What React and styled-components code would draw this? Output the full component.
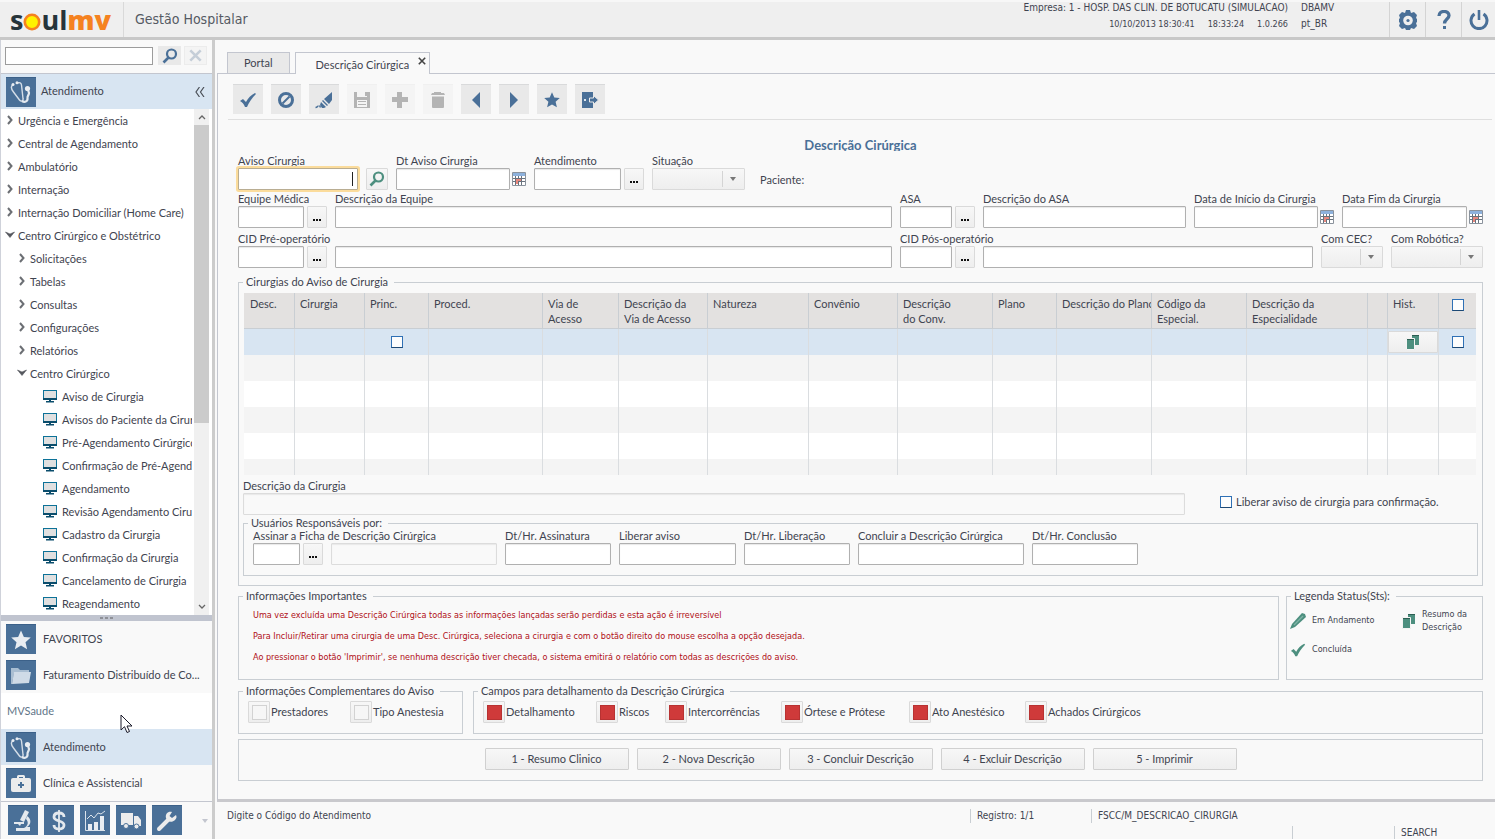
import React from 'react';
import styled, { createGlobalStyle, css } from 'styled-components';

const c = {
  text: '#3f4450',
  blue: '#4a7098',
  blueDark: '#3c6189',
  green: '#4d8f7f',
  line: '#c3c6cf',
  frame: '#c9ced3',
  select: '#d8e5f2',
  page: '#f9f9f9',
  red: '#b00e16',
};

const compact = '"DejaVu Sans Condensed", "DejaVu Sans", sans-serif';

const GlobalStyle = createGlobalStyle`
  *, *::before, *::after { box-sizing: border-box; }
  body { margin: 0; background: ${c.page}; }
  body, button, input, select { font-family: Lato, "Liberation Sans", sans-serif; font-size: 11px; color: ${c.text}; }
  button { padding: 0; border: 0; background: none; }
  ul { list-style: none; margin: 0; padding: 0; }
`;

/* ---------- shell ---------- */

const Page = styled.div`
  display: flex;
  flex-direction: column;
  height: 100vh;
  overflow: hidden;
`;

const Header = styled.header`
  display: flex;
  flex: none;
  height: 40px;
  background: #efefef;
  border-top: 2px solid #f7f7f7;
  border-bottom: 3px solid #c8c8c8;
`;

const Logo = styled.div`
  display: flex;
  align-items: center;
  width: 124px;
  padding-left: 10px;
  border-right: 1px solid #d9d9d9;
  font: 700 27px/34px "Open Sans", sans-serif;
  color: #26343a;
  svg { margin-top: 4px; }
  b { color: #f58220; }
`;

const Product = styled.h1`
  flex: 1;
  margin: 0;
  padding-left: 11px;
  font-family: ${compact};
  font-size: 14px;
  font-weight: 400;
  line-height: 34px;
  color: #555a63;
`;

const Session = styled.div`
  display: grid;
  grid-template-columns: auto 88px;
  column-gap: 13px;
  align-content: start;
  font-family: ${compact};
  font-size: 10px;
  line-height: 12px;
  row-gap: 4px;
`;

const SessionLine = styled.div`
  display: flex;
  justify-content: flex-end;
  gap: 13px;
  font-size: ${(p) => (p.$small ? 9 : 10)}px;
`;

const HeaderButton = styled.button`
  display: flex;
  align-items: center;
  justify-content: center;
  width: 36px;
  border-left: 1px solid #d4d4d4;
  &:last-child { width: 34px; }
`;

const Body = styled.div`
  display: flex;
  flex: 1;
  min-height: 0;
`;

/* Raises the text by a pixel against the icon beside it. */
const Caption = styled.span`
  padding-bottom: 2px;
`;

/* ---------- sidebar ---------- */

const Sidebar = styled.aside`
  display: flex;
  flex-direction: column;
  flex: none;
  width: 215px;
  border-left: 1px solid #cfd2da;
  border-right: 3px solid #ccc;
`;

const Search = styled.form`
  display: flex;
  align-items: center;
  height: 34px;
  padding: 0 5px 2px 4px;
  border-bottom: 1px solid ${c.line};
  input {
    flex: 1;
    min-width: 0;
    height: 18px;
    margin-right: 5px;
    border: 1px solid #9c9c9c;
    background: #fff;
  }
`;

const SmallButton = styled.button`
  display: flex;
  align-items: center;
  justify-content: center;
  width: 23px;
  height: 19px;
  margin-right: ${(p) => (p.$muted ? 0 : 3)}px;
  background: ${(p) => (p.$muted ? '#f4f4f4' : '#e9e9e9')};
  border: 1px solid ${(p) => (p.$muted ? '#ececec' : '#e9e9e9')};
`;

const ModuleTitle = styled.div`
  display: flex;
  align-items: center;
  height: 35px;
  padding: 0 7px 0 5px;
  background: ${c.select};
  gap: 5px;
  span { flex: 1; }
`;

const Tile = styled.span`
  && { flex: none; }
  display: flex;
  align-items: center;
  justify-content: center;
  width: 30px;
  height: 30px;
  background: ${c.blue};
  border-top: 1px solid ${c.blueDark};
  color: #e9edf2;
`;

const TreePane = styled.div`
  display: flex;
  flex: 1;
  min-height: 0;
  background: #fff;
  padding-right: 3px;
`;

const Tree = styled.ul`
  flex: 1;
  min-width: 0;
  overflow: hidden;
  margin-right: 2px;
`;

const Branch = styled.li`
  display: flex;
  align-items: center;
  height: 23px;
  padding-bottom: 1px;
  padding-left: ${(p) => [4, 16, 42][p.$level]}px;
  gap: ${(p) => (p.$level === 2 ? 5 : 3)}px;
  white-space: nowrap;
  svg { flex: none; }
`;

const ScrollTrack = styled.div`
  display: flex;
  flex-direction: column;
  width: 15px;
  background: #f0f0f0;
`;

const ScrollArrow = styled.button`
  display: flex;
  align-items: center;
  justify-content: center;
  height: 16px;
`;

const ScrollThumb = styled.div`
  flex: 298;
  background: #cbcbcb;
`;

const ScrollRest = styled.div`
  flex: 176;
`;

const Splitter = styled.div`
  display: flex;
  align-items: center;
  justify-content: center;
  gap: 2px;
  height: 6px;
  background: #c0c4cf;
  i { width: 3px; height: 2px; background: #8e9097; }
`;

const ModuleRow = styled.li`
  position: relative;
  display: flex;
  align-items: center;
  height: 36px;
  padding-left: 5px;
  gap: 7px;
  white-space: nowrap;
  overflow: ${(p) => (p.$plain ? 'visible' : 'hidden')};
  background: ${(p) => (p.$active ? c.select : p.$plain ? '#fff' : c.page)};
  ${(p) => p.$plain && css`padding-left: 6px; color: #5f7588;`}
`;

const Pointer = styled.svg`
  position: absolute;
  left: 119px;
  top: 21px;
  z-index: 2;
`;

const Shortcuts = styled.div`
  display: flex;
  align-items: flex-start;
  gap: 6px;
  height: 38px;
  padding: 3px 4px 0 7px;
  border-top: 1px solid ${c.line};
  > svg { margin: 14px 0 0 auto; }
`;

/* ---------- main area ---------- */

const Main = styled.main`
  display: flex;
  flex-direction: column;
  flex: 1;
  min-width: 0;
  padding-left: 2px;
`;

const Tabs = styled.nav`
  display: flex;
  align-items: flex-end;
  flex: none;
  gap: 5px;
  height: 34px;
  padding-left: 10px;
  border-bottom: 1px solid ${c.line};
`;

const Tab = styled.button`
  display: flex;
  align-items: center;
  justify-content: center;
  height: 21px;
  padding: 0 16px;
  background: #e9e9e9;
  border: 1px solid ${c.line};
  border-bottom: 0;
  line-height: 20px;
  ${(p) =>
    p.$active &&
    css`
      height: 22px;
      margin-bottom: -1px;
      padding: 2px 3px 0 20px;
      gap: 9px;
      background: ${c.page};
      svg { margin-top: -7px; }
    `}
`;

const Workspace = styled.section`
  flex: 1;
  padding: 10px 3px 0 10px;
  border-left: 1px solid ${c.line};
  border-bottom: 3px solid #c9c9cd;
`;

const Toolbar = styled.div`
  display: flex;
  gap: 8px;
  height: 36px;
  padding-left: 5px;
  border-bottom: 1px solid #dfdfdf;
`;

const Tool = styled.button`
  display: flex;
  align-items: center;
  justify-content: center;
  width: 30px;
  height: 30px;
  background: ${(p) => (p.disabled ? '#f4f4f4' : '#e9e9e9')};
  border-top: 1px solid ${(p) => (p.disabled ? '#f0f0f0' : '#d9dadb')};
  color: ${(p) => (p.disabled ? '#b4b4b4' : c.blue)};
`;

const Form = styled.form`
  padding: 18px 9px 0 10px;
`;

const Heading = styled.h2`
  height: 13px;
  margin: 0 0 4px;
  overflow: hidden;
  text-align: center;
  font-size: 13px;
  line-height: 14px;
  color: ${c.blue};
`;

const Row = styled.div`
  display: flex;
  align-items: flex-end;
  gap: 8px;
  margin-bottom: ${(p) => p.$after || 0}px;
`;

const Cell = styled.div`
  display: flex;
  flex-direction: column;
  flex: ${(p) => (p.$w ? `0 0 ${p.$w}px` : '1')};
  min-width: 0;
  label {
    height: 13px;
    line-height: 12px;
    white-space: nowrap;
  }
`;

const Line = styled.div`
  position: relative;
  display: flex;
  align-items: center;
  gap: ${(p) => p.$gap || 2}px;
`;

const TextBox = styled.input`
  flex: 1;
  min-width: 0;
  height: 22px;
  padding: 0 4px;
  border: 1px solid #b0b0b0;
  border-radius: 1px;
  background: #fff;
  box-shadow: inset 0 1px 1px #e8e8e8;
  outline: 0;
  &:read-only { border-color: #dcdcdc; background: ${c.page}; }
  ${(p) => p.$focus && css`box-shadow: 0 0 0 2px #fbdc9c; border-color: #b9ad92;`}
`;

const Caret = styled.i`
  position: absolute;
  right: 5px;
  top: 4px;
  width: 1px;
  height: 14px;
  background: #222;
`;

const raised = css`
  border: 1px solid #dadada;
  border-radius: 1px;
  background: linear-gradient(#f7f7f7, #eeeeee);
`;

const Lookup = styled.button`
  ${raised}
  flex: none;
  width: ${(p) => p.$w || 20}px;
  height: 22px;
  display: flex;
  align-items: center;
  justify-content: center;
  gap: 1px;
  i { width: 2px; height: 2px; margin-top: 6px; background: #111; }
`;

const SelectWrap = styled.div`
  position: relative;
  display: flex;
  select {
    ${raised}
    appearance: none;
    width: 100%;
    height: 22px;
  }
  &::before {
    content: '';
    position: absolute;
    right: 22px;
    top: 3px;
    width: 1px;
    height: 16px;
    background: #d4d4d4;
  }
  &::after {
    content: '';
    position: absolute;
    right: 9px;
    top: 9px;
    border: 3px solid transparent;
    border-top: 4px solid #777;
    border-bottom: 0;
  }
`;

const Patient = styled.span`
  padding-left: 7px;
  line-height: 20px;
`;

const Group = styled.fieldset`
  flex: ${(p) => (p.$w ? `0 0 ${p.$w}px` : '1')};
  min-width: 0;
  margin: 0;
  padding: 0 4px ${(p) => p.$bottom || 0}px;
  border: 1px solid ${c.frame};
  legend {
    height: 13px;
    padding: 0 6px 0 3px;
    line-height: 12px;
  }
`;

const TableClip = styled.div`
  height: 182px;
  margin: 4px 2px 5px 1px;
  overflow: hidden;
`;

const Grid = styled.table`
  width: 100%;
  table-layout: fixed;
  border-collapse: separate;
  border-spacing: 0;
  th {
    height: 36px;
    padding: 3px 0 0 5px;
    text-align: left;
    vertical-align: top;
    font-weight: 400;
    line-height: 15px;
    background: #e3e1e0;
    border-left: 1px solid ${c.frame};
    border-bottom: 1px solid ${c.frame};
    overflow: hidden;
    white-space: nowrap;
  }
  td {
    height: 26px;
    padding: 0;
    text-align: center;
    border-left: 1px solid #dadde0;
  }
  th:first-child { padding-left: 6px; }
  th:last-child { padding-left: 0; }
  th:first-child, td:first-child { border-left: 0; }
  tbody tr { background: #fff; }
  tbody tr:nth-child(even) { background: #f4f4f4; }
  tbody tr:first-child { background: ${c.select}; }
`;

const HistoryButton = styled.button`
  ${raised}
  display: flex;
  align-items: center;
  justify-content: center;
  width: 100%;
  height: 22px;
`;

const Check = styled.input`
  appearance: none;
  display: block;
  width: 12px;
  height: 12px;
  margin: ${(p) => (p.$head ? '3px auto 0' : p.$inline ? '0' : '0 auto')};
  border: 1px solid #2f70b5;
  border-bottom-color: #1d4873;
  background: #fdfdfd;
`;

const Release = styled.label`
  display: flex;
  align-items: center;
  gap: 4px;
  width: 258px;
  height: 22px;
  padding-bottom: 4px;
`;

const DescriptionRow = styled(Row)`
  gap: 35px;
`;

const UserRow = styled(Row)`
  padding-left: 5px;
`;

const Pair = styled.div`
  display: flex;
  gap: ${(p) => p.$gap}px;
  margin-top: ${(p) => p.$top}px;
`;

const Notices = styled.div`
  height: 76px;
  padding: 2px 0 0 10px;
  font-family: ${compact};
  font-size: 9px;
  color: ${c.red};
  p { margin: 0; line-height: 21px; }
`;

const Legend = styled.ul`
  display: grid;
  grid-template-columns: 112px 1fr;
  grid-template-rows: 29px 29px;
  padding-top: 3px;
  margin: 0 -1px;
  font-family: ${compact};
  font-size: 9px;
  line-height: 13px;
  li { display: flex; align-items: center; gap: 6px; }
`;

const Details = styled.div`
  display: grid;
  grid-template-columns: ${(p) => p.$cols};
  height: 35px;
  padding: 3px 0 0 5px;
`;

const Detail = styled.button`
  display: flex;
  align-items: center;
  gap: 1px;
  height: 22px;
  white-space: nowrap;
  i {
    ${raised}
    display: flex;
    align-items: center;
    justify-content: center;
    width: 22px;
    height: 22px;
  }
  i::after {
    content: '';
    width: 15px;
    height: 15px;
    background: ${(p) => (p.$on ? '#cf3a3a' : '#f6f6f6')};
    border: 1px solid ${(p) => (p.$on ? '#b83232' : '#d2d2d2')};
  }
`;

const Actions = styled.div`
  display: flex;
  justify-content: center;
  align-items: center;
  gap: 8px;
  height: 42px;
  margin-top: 5px;
  padding-bottom: 2px;
  border: 1px solid ${c.frame};
`;

const Action = styled.button`
  ${raised}
  width: 144px;
  height: 22px;
  padding-bottom: 2px;
  border-color: #d0d0d0;
`;

const Status = styled.footer`
  flex: none;
  height: 37px;
  padding: 7px 0 0 10px;
  font-family: ${compact};
  font-size: 10px;
  div { display: flex; height: 14px; line-height: 13px; margin-bottom: 3px; }
`;

const Slot = styled.span`
  flex: ${(p) => (p.$w ? `0 0 ${p.$w}px` : '1')};
  padding-left: ${(p) => (p.$first ? 0 : 6)}px;
  border-left: ${(p) => (p.$first ? 0 : 1)}px solid ${c.frame};
`;

/* ---------- icons ---------- */

const Svg = ({ s = 16, w, h, children, ...rest }) => (
  <svg width={w || s} height={h || s} viewBox={`0 0 ${w || s} ${h || s}`} aria-hidden="true" {...rest}>
    {children}
  </svg>
);

const Arrow = ({ open }) =>
  open ? (
    <Svg w={10} h={8}><path d="M.5 1l4.500 2L9.500 1 5 6.500z" fill="#55585e" stroke="#55585e" strokeWidth=".6" /></Svg>
  ) : (
    <Svg w={10} h={10}><path d="M3 1l3.500 4L3 9" fill="none" stroke="#6c6f74" strokeWidth="2" /></Svg>
  );

const Monitor = () => (
  <Svg w={14} h={13}>
    <path d="M0 0h14v10H0z" fill="#0d7298" />
    <path d="M1 1h12v7H1z" fill="#e0e0e0" />
    <path d="M0 8h14v2H0z" fill="#0a4d6c" />
    <path d="M6 10h2v1h3v1.500H3V11h3z" fill="#0a4d6c" />
  </Svg>
);

const Stethoscope = () => (
  <Svg s={24}>
    <path d="M3.500 5C1.500 7 2 9 4.500 12l6 8c1.500 2 4 1 3.500-1.500L12.500 5c-.3-2-2-3-4-2" fill="none" stroke="#d5dee8" strokeWidth="1.400" />
    <path d="M13 21c3 2 6 0 5.500-3-.3-2 1.500-3 1.500-5l-1-3" fill="none" stroke="#e4eaf0" strokeWidth="2.200" />
    <circle cx="18.500" cy="8.500" r="2.600" fill="#e9edf2" />
    <circle cx="4" cy="4.500" r="1.500" fill="#e9edf2" />
    <circle cx="8" cy="2.800" r="1.500" fill="#e9edf2" />
  </Svg>
);

const StarShape = ({ s = 16, fill = 'currentColor' }) => (
  <svg width={s} height={s} viewBox="0 0 16 16" aria-hidden="true">
    <path d="M8 .3l2.300 5.200 5.500.5-4.200 3.700 1.300 5.600L8 12.400l-4.900 2.900 1.300-5.600L.2 6l5.500-.5z" fill={fill} />
  </svg>
);

const Folder = () => (
  <Svg s={22}>
    <path d="M1 3h7l2 2h9v3H4L2 19H1z" fill="#a9bed2" />
    <path d="M4 7h17l-2 11-17 1z" fill="#cfdbe7" />
  </Svg>
);

const FirstAid = () => (
  <Svg s={22}>
    <path d="M7 5V3.500Q7 2 8.500 2h5Q15 2 15 3.500V5h-2V4H9v1z" fill="#ececec" />
    <rect x="1" y="5" width="20" height="14" rx="2" fill="#ececec" />
    <path d="M10 9h2v2h2v2h-2v2h-2v-2H8v-2h2z" fill={c.blue} />
  </Svg>
);

const Microscope = () => (
  <Svg s={22}>
    <path d="M13 0l4 2-5 10-4-2z" fill="#e4e9ee" />
    <path d="M15 6c5 3 4 9 0 11h3v4H4v-3h8c4-2 5-6 2-9z" fill="#e4e9ee" />
    <path d="M2 12h10v2H9l-1 2-2-2H2z" fill="#e4e9ee" />
  </Svg>
);

const Dollar = () => (
  <Svg s={22}>
    <path d="M16 7c0-3-2-4-5-4S6 4.500 6 7c0 5 10 3 10 8 0 3-2 4-5 4s-5-1-5-4" fill="none" stroke="#e4e9ee" strokeWidth="2.800" />
    <path d="M11 0v22" stroke="#e4e9ee" strokeWidth="1.800" />
  </Svg>
);

const Chart = () => (
  <Svg s={22}>
    <path d="M1.500 1v19.500H21" fill="none" stroke="#dbe3eb" />
    <path d="M4 20v-6h4v6zM10 20v-8h4v8zM16 20V6h4v14z" fill="#e9edf2" />
    <path d="M3 9l4-4 3 3 4-5 3 1 4-3" fill="none" stroke="#dbe3eb" />
  </Svg>
);

const Truck = () => (
  <Svg s={22}>
    <path d="M1 3h12v12H1zM14 6h4l3 4v6h-7z" fill="#ececec" />
    <circle cx="6" cy="16" r="2.500" fill="#ececec" stroke={c.blue} />
    <circle cx="16.500" cy="16.500" r="2.500" fill="#ececec" stroke={c.blue} />
  </Svg>
);

const Wrench = () => (
  <Svg s={22}>
    <path d="M3 19L13 9" stroke="#ececec" strokeWidth="4" strokeLinecap="round" />
    <path d="M20 5l-4 3-2.500-2L16 2c-4-1-7 2-6 6 1 4 6 5 9 2 1.500-1.500 2-3 1-5z" fill="#ececec" />
  </Svg>
);

const Tick = ({ s = 18, color = 'currentColor' }) => (
  <svg width={s} height={s} viewBox="0 0 18 18" aria-hidden="true">
    <path d="M1 10l3-2 3 3c2-4 5-7 9-9l1 1c-4 4-7 8-9 13H6C5 13 3 11 1 10z" fill={color} />
  </svg>
);

const Ban = () => (
  <Svg s={18}>
    <circle cx="9" cy="9" r="6.500" fill="none" stroke="currentColor" strokeWidth="3" />
    <path d="M5.500 12.500l7-7" stroke="currentColor" strokeWidth="2" />
  </Svg>
);

const Brush = () => (
  <Svg s={18}>
    <path d="M17 1v8l-3 4-5-5zM8 9l5 5-1 1-5-5zM6 11l5 5-2 1H7l-2-3z" fill="currentColor" />
    <path d="M4.500 14.500l1 2M3.500 15c-1 0-1 1.500-3 1.500" fill="none" stroke="currentColor" strokeWidth="1.500" />
  </Svg>
);

const Disk = () => (
  <Svg s={18}>
    <path d="M1 1h3v5h10V1h3v16H1z" fill="currentColor" />
    <path d="M4 9h10v7H4z" fill="#f4f4f4" />
    <path d="M5 10.500h8M5 13.500h8" stroke="currentColor" />
    <path d="M13 1v4" stroke="currentColor" strokeWidth="2" />
  </Svg>
);

const Plus = () => (
  <Svg s={18}><path d="M6 1h5v5h6v5h-6v6H6v-6H1V6h5z" fill="currentColor" /></Svg>
);

const Trash = () => (
  <Svg s={18}>
    <path d="M5 1h7v1h3l1 2H2l1-2h2zM3 5.500h12V16q0 1-1 1H4q-1 0-1-1z" fill="currentColor" />
  </Svg>
);

const Triangle = ({ next }) => (
  <Svg w={10} h={16}><path d={next ? 'M1 0l8 8-8 8z' : 'M9 0L1 8l8 8z'} fill="currentColor" /></Svg>
);

const Door = () => (
  <Svg s={18}>
    <path d="M1 1h11v16H1z" fill="currentColor" />
    <path d="M3 8h2v2H3z" fill="#dfe8f0" />
    <path d="M8.500 7h4V4.500L17.500 9l-5 4.500V11h-4z" fill="currentColor" stroke="#e9e9e9" />
  </Svg>
);

const Magnifier = ({ color }) => (
  <Svg s={16}>
    <circle cx="9.500" cy="6" r="4.500" fill="none" stroke={color} strokeWidth="2.200" />
    <path d="M6.500 9.500L1.500 14.500" stroke={color} strokeWidth="2.600" />
  </Svg>
);

const Cross = ({ s, color, width }) => (
  <svg width={s} height={s} viewBox="0 0 10 10" aria-hidden="true">
    <path d="M1 1l8 8M9 1L1 9" stroke={color} strokeWidth={width} />
  </svg>
);

const Calendar = () => (
  <Svg s={14}>
    <path d="M.5.5h13v13H.5z" fill="#fff" stroke="#8a929c" />
    <path d="M1 1h12v3H1z" fill="#8db1dc" />
    <path d="M1 6.500h12M1 9.500h12M3.500 4v9M6.500 4v9M9.500 4v9" stroke="#68727d" />
    <path d="M4 7h5v2H4zM4 9h2v3H4z" fill="#e8877d" />
  </Svg>
);

const Sheets = () => (
  <Svg w={14} h={16}>
    <path d="M6 1h7v10H6z" fill={c.green} />
    <path d="M6 1.500h7" stroke="#2d5f53" />
    <path d="M.5 4.500h8v11h-8z" fill={c.green} stroke="#f4f4f4" />
    <path d="M1 5.500h7" stroke="#2d5f53" />
  </Svg>
);

const Pencil = () => (
  <Svg s={16}>
    <path d="M0 16l2-5L12 0l3 1 1 3L5 14z" fill={c.green} />
    <path d="M4 12l9-9" stroke="#7fb3a6" strokeWidth="1.500" />
  </Svg>
);

const Gear = () => (
  <Svg s={20}>
    <path d="M8 0h4l1 3 3-1 3 3-1 3 1 1v3l-1 1 1 3-3 3-3-1-1 2H8l-1-2-3 1-3-3 1-3-1-1V9l1-1-1-3 3-3 3 1z" fill={c.blue} />
    <circle cx="10" cy="10.500" r="4.800" fill="#efefef" />
    <circle cx="10" cy="10.500" r="1.600" fill={c.blue} />
  </Svg>
);

const Question = () => (
  <Svg w={14} h={20}>
    <path d="M2 6c0-6 10-6 10-.5C12 9 7.500 9 7.500 13.500" fill="none" stroke={c.blue} strokeWidth="3.300" />
    <path d="M6 16h3v3H6z" fill={c.blue} />
  </Svg>
);

const Power = () => (
  <Svg s={20}>
    <path d="M5.500 4a8 8 0 1 0 9 0" fill="none" stroke={c.blue} strokeWidth="3" />
    <path d="M10 0v10" stroke={c.blue} strokeWidth="2.600" />
  </Svg>
);

const Chevron = ({ down }) => (
  <Svg w={8} h={6}><path d={down ? 'M1 1l3 3 3-3' : 'M1 5l3-3 3 3'} fill="none" stroke="#666" strokeWidth="1.300" /></Svg>
);

/* ---------- composed parts ---------- */

const Dots = ({ label, w = 20 }) => (
  <Lookup type="button" aria-label={label} $w={w}><i /><i /><i /></Lookup>
);

const Field = ({ id, label, name, w, lookup, calendar, readOnly }) => (
  <Cell $w={w}>
    {label ? <label htmlFor={id}>{label}</label> : null}
    <Line $gap={lookup ? 3 : 2}>
      <TextBox id={id} type="text" readOnly={readOnly} aria-label={name} />
      {lookup && <Dots label="Pesquisar" />}
      {calendar && <Calendar />}
    </Line>
  </Cell>
);

const Choice = ({ id, label, w }) => (
  <Cell $w={w}>
    <label htmlFor={id}>{label}</label>
    <SelectWrap><select id={id}><option value="" /></select></SelectWrap>
  </Cell>
);

const tree = [
  [0, 'Urgência e Emergência'],
  [0, 'Central de Agendamento'],
  [0, 'Ambulatório'],
  [0, 'Internação'],
  [0, 'Internação Domiciliar (Home Care)'],
  [0, 'Centro Cirúrgico e Obstétrico', true],
  [1, 'Solicitações'],
  [1, 'Tabelas'],
  [1, 'Consultas'],
  [1, 'Configurações'],
  [1, 'Relatórios'],
  [1, 'Centro Cirúrgico', true],
  [2, 'Aviso de Cirurgia'],
  [2, 'Avisos do Paciente da Cirurgia'],
  [2, 'Pré-Agendamento Cirúrgico'],
  [2, 'Confirmação de Pré-Agendamento'],
  [2, 'Agendamento'],
  [2, 'Revisão Agendamento Cirurgia'],
  [2, 'Cadastro da Cirurgia'],
  [2, 'Confirmação da Cirurgia'],
  [2, 'Cancelamento de Cirurgia'],
  [2, 'Reagendamento'],
];

const columns = [
  [50, 'Desc.'], [70, 'Cirurgia'], [64, 'Princ.'], [114, 'Proced.'], [76, 'Via de', 'Acesso'],
  [89, 'Descrição da', 'Via de Acesso'], [101, 'Natureza'], [89, 'Convênio'], [95, 'Descrição', 'do Conv.'],
  [64, 'Plano'], [95, 'Descrição do Plano'], [95, 'Código da', 'Especial.'], [121, 'Descrição da', 'Especialidade'],
  [20, ''], [51, 'Hist.'], [38, null],
];

const tools = [
  ['Confirmar', <Tick />], ['Cancelar', <Ban />], ['Limpar', <Brush />], ['Salvar', <Disk />, true],
  ['Adicionar', <Plus />, true], ['Excluir', <Trash />, true], ['Anterior', <Triangle />],
  ['Próximo', <Triangle next />], ['Favorito', <StarShape />], ['Sair', <Door />],
];

const actions = ['1 - Resumo Clinico', '2 - Nova Descrição', '3 - Concluir Descrição', '4 - Excluir Descrição', '5 - Imprimir'];
const details = ['Detalhamento', 'Riscos', 'Intercorrências', 'Órtese e Prótese', 'Ato Anestésico', 'Achados Cirúrgicos'];

const TopBar = () => (
  <Header>
    <Logo>
      s<Svg s={18}><circle cx="9" cy="9" r="7.200" fill="#fff200" stroke="#f58220" strokeWidth="2.600" /></Svg>ul<b>mv</b>
    </Logo>
    <Product>Gestão Hospitalar</Product>
    <Session>
      <SessionLine>Empresa: 1 - HOSP. DAS CLIN. DE BOTUCATU (SIMULACAO)</SessionLine>
      <span>DBAMV</span>
      <SessionLine $small><span>10/10/2013 18:30:41</span><span>18:33:24</span><span>1.0.266</span></SessionLine>
      <span>pt_BR</span>
    </Session>
    <HeaderButton aria-label="Configurações"><Gear /></HeaderButton>
    <HeaderButton aria-label="Ajuda"><Question /></HeaderButton>
    <HeaderButton aria-label="Sair"><Power /></HeaderButton>
  </Header>
);

const SideMenu = () => (
  <Sidebar>
    <Search>
      <input type="text" aria-label="Buscar no menu" />
      <SmallButton type="button" aria-label="Buscar"><Magnifier color={c.blue} /></SmallButton>
      <SmallButton type="button" aria-label="Limpar busca" $muted><Cross s={13} color="#c5ced8" width={2} /></SmallButton>
    </Search>
    <ModuleTitle>
      <Tile><Stethoscope /></Tile>
      <Caption>Atendimento</Caption>
      <Svg w={10} h={10}><path d="M4.500 0L1 5l3.500 5M9 0L5.500 5 9 10" fill="none" stroke="#4b5058" strokeWidth="1.200" /></Svg>
    </ModuleTitle>
    <TreePane>
      <Tree>
        {tree.map(([level, name, open]) => (
          <Branch key={name} $level={level}>
            {level === 2 ? <Monitor /> : <Arrow open={open} />}
            <span>{name}</span>
          </Branch>
        ))}
      </Tree>
      <ScrollTrack>
        <ScrollArrow aria-label="Rolar para cima"><Chevron /></ScrollArrow>
        <ScrollThumb />
        <ScrollRest />
        <ScrollArrow aria-label="Rolar para baixo"><Chevron down /></ScrollArrow>
      </ScrollTrack>
    </TreePane>
    <Splitter><i /><i /><i /></Splitter>
    <ul>
      <ModuleRow><Tile><StarShape s={20} fill="#e9edf2" /></Tile><Caption>FAVORITOS</Caption></ModuleRow>
      <ModuleRow><Tile><Folder /></Tile><Caption>Faturamento Distribuído de Co...</Caption></ModuleRow>
      <ModuleRow $plain>
        <Caption>MVSaude</Caption>
        <Pointer width="13" height="20" viewBox="0 0 13 20" aria-hidden="true">
          <path d="M1 1v15l3.500-3.300L7 18.500l2.500-1L7 12h5z" fill="#fff" stroke="#1a1a2a" />
        </Pointer>
      </ModuleRow>
      <ModuleRow $active><Tile><Stethoscope /></Tile><Caption>Atendimento</Caption></ModuleRow>
      <ModuleRow><Tile><FirstAid /></Tile><Caption>Clínica e Assistencial</Caption></ModuleRow>
    </ul>
    <Shortcuts>
      <Tile><Microscope /></Tile>
      <Tile><Dollar /></Tile>
      <Tile><Chart /></Tile>
      <Tile><Truck /></Tile>
      <Tile><Wrench /></Tile>
      <Svg w={6} h={4}><path d="M0 0h6L3 4z" fill="#c3c6cf" /></Svg>
    </Shortcuts>
  </Sidebar>
);

const SurgeryForm = () => (
  <Form>
    <Heading>Descrição Cirúrgica</Heading>

    <Row $after={3}>
      <Cell $w={120}>
        <label htmlFor="aviso">Aviso Cirurgia</label>
        <Line><TextBox id="aviso" type="text" $focus /><Caret /></Line>
      </Cell>
      <Lookup type="button" aria-label="Buscar aviso" $w={22}><Magnifier color={c.green} /></Lookup>
      <Field id="dt-aviso" label="Dt Aviso Cirurgia" w={130} calendar />
      <Field id="atendimento" label="Atendimento" w={110} lookup />
      <Choice id="situacao" label="Situação" w={93} />
      <Patient>Paciente:</Patient>
    </Row>

    <Row $after={5}>
      <Field id="equipe" label="Equipe Médica" w={89} lookup />
      <Field id="desc-equipe" label="Descrição da Equipe" />
      <Field id="asa" label="ASA" w={75} lookup />
      <Field id="desc-asa" label="Descrição do ASA" w={203} />
      <Field id="inicio" label="Data de Início da Cirurgia" w={140} calendar />
      <Field id="fim" label="Data Fim da Cirurgia" w={141} calendar />
    </Row>

    <Row $after={8}>
      <Field id="cid-pre" label="CID Pré-operatório" w={89} lookup />
      <Field id="desc-cid-pre" name="Descrição do CID pré-operatório" />
      <Field id="cid-pos" label="CID Pós-operatório" w={75} lookup />
      <Field id="desc-cid-pos" name="Descrição do CID pós-operatório" w={330} />
      <Choice id="cec" label="Com CEC?" w={62} />
      <Choice id="robotica" label="Com Robótica?" w={92} />
    </Row>

    <Group $bottom={9}>
      <legend>Cirurgias do Aviso de Cirurgia</legend>
      <TableClip>
        <Grid>
          <colgroup>
            {columns.map(([w], i) => <col key={i} width={w} />)}
          </colgroup>
          <thead>
            <tr>
              {columns.map(([, a, b], i) => (
                <th key={i}>
                  {a === null ? <Check type="checkbox" $head aria-label="Selecionar todas" /> : a}
                  {b && <><br />{b}</>}
                </th>
              ))}
            </tr>
          </thead>
          <tbody>
            {[0, 1, 2, 3, 4, 5].map((r) => (
              <tr key={r}>
                {columns.map((_, i) => (
                  <td key={i}>
                    {r === 0 && i === 2 && <Check type="checkbox" aria-label="Principal" />}
                    {r === 0 && i === 14 && <HistoryButton type="button" aria-label="Histórico"><Sheets /></HistoryButton>}
                    {r === 0 && i === 15 && <Check type="checkbox" aria-label="Selecionar" />}
                  </td>
                ))}
              </tr>
            ))}
          </tbody>
        </Grid>
      </TableClip>
      <DescriptionRow $after={2}>
        <Field id="desc-cirurgia" label="Descrição da Cirurgia" readOnly />
        <Release>
          <Check type="checkbox" $inline />
          <Caption>Liberar aviso de cirurgia para confirmação.</Caption>
        </Release>
      </DescriptionRow>
      <Group $bottom={10}>
        <legend>Usuários Responsáveis por:</legend>
        <UserRow>
          <Field id="assinar" label="Assinar a Ficha de Descrição Cirúrgica" w={70} lookup />
          <Field id="responsavel" name="Nome do responsável" w={166} readOnly />
          <Field id="dt-assinatura" label="Dt/Hr. Assinatura" w={106} />
          <Field id="liberar" label="Liberar aviso" w={117} />
          <Field id="dt-liberacao" label="Dt/Hr. Liberação" w={106} />
          <Field id="concluir" label="Concluir a Descrição Cirúrgica" w={166} />
          <Field id="dt-conclusao" label="Dt/Hr. Conclusão" w={106} />
        </UserRow>
      </Group>
    </Group>

    <Pair $gap={7} $top={4}>
      <Group>
        <legend>Informações Importantes</legend>
        <Notices>
          <p>Uma vez excluída uma Descrição Cirúrgica todas as informações lançadas serão perdidas e esta ação é irreversível</p>
          <p>Para Incluir/Retirar uma cirurgia de uma Desc. Cirúrgica, seleciona a cirurgia e com o botão direito do mouse escolha a opção desejada.</p>
          <p>Ao pressionar o botão 'Imprimir', se nenhuma descrição tiver checada, o sistema emitirá o relatório com todas as descrições do aviso.</p>
        </Notices>
      </Group>
      <Group $w={197}>
        <legend>Legenda Status(Sts):</legend>
        <Legend>
          <li><Pencil />Em Andamento</li>
          <li><Sheets /><span>Resumo da<br />Descrição</span></li>
          <li><Tick s={16} color={c.green} />Concluída</li>
        </Legend>
      </Group>
    </Pair>

    <Pair $gap={10} $top={5}>
      <Group $w={225}>
        <legend>Informações Complementares do Aviso</legend>
        <Details $cols="102px auto">
          <Detail type="button"><i /><Caption>Prestadores</Caption></Detail>
          <Detail type="button"><i /><Caption>Tipo Anestesia</Caption></Detail>
        </Details>
      </Group>
      <Group>
        <legend>Campos para detalhamento da Descrição Cirúrgica</legend>
        <Details $cols="113px 69px 116px 128px 116px auto">
          {details.map((d) => <Detail key={d} type="button" $on><i /><Caption>{d}</Caption></Detail>)}
        </Details>
      </Group>
    </Pair>

    <Actions>
      {actions.map((a) => <Action key={a} type="button">{a}</Action>)}
    </Actions>
  </Form>
);

export default function App() {
  return (
    <Page>
      <GlobalStyle />
      <TopBar />
      <Body>
        <SideMenu />
        <Main>
          <Tabs>
            <Tab type="button">Portal</Tab>
            <Tab type="button" $active>Descrição Cirúrgica<Cross s={8} color="#444" width={2} /></Tab>
          </Tabs>
          <Workspace>
            <Toolbar>
              {tools.map(([name, icon, off]) => (
                <Tool key={name} type="button" aria-label={name} disabled={off}>{icon}</Tool>
              ))}
            </Toolbar>
            <SurgeryForm />
          </Workspace>
          <Status>
            <div>
              <Slot $first>Digite o Código do Atendimento</Slot>
              <Slot $w={121}>Registro: 1/1</Slot>
              <Slot $w={404}>FSCC/M_DESCRICAO_CIRURGIA</Slot>
            </div>
            <div>
              <Slot $first />
              <Slot $w={102} />
              <Slot $w={101}>SEARCH</Slot>
            </div>
          </Status>
        </Main>
      </Body>
    </Page>
  );
}
